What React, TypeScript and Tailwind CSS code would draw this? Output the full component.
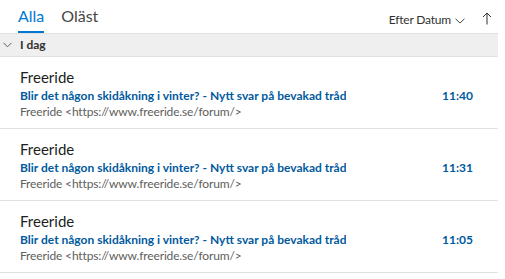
import React from 'react';

const items = [
  { from: 'Freeride', subject: 'Blir det någon skidåkning i vinter? - Nytt svar på bevakad tråd', time: '11:40', preview: 'Freeride <https://www.freeride.se/forum/>' },
  { from: 'Freeride', subject: 'Blir det någon skidåkning i vinter? - Nytt svar på bevakad tråd', time: '11:31', preview: 'Freeride <https://www.freeride.se/forum/>' },
  { from: 'Freeride', subject: 'Blir det någon skidåkning i vinter? - Nytt svar på bevakad tråd', time: '11:05', preview: 'Freeride <https://www.freeride.se/forum/>' },
];

export default function App() {
  return (
    <div className="w-[505px] h-[279px] overflow-hidden bg-white font-['Lato',sans-serif] text-[#201f1e]">
      {/* Tabs + sort */}
      <div className="flex items-end h-[33px] pr-[13px]">
        <div className="flex items-end gap-[17px] pl-[18px]">
          <div className="flex flex-col">
            <span className="text-[16px] leading-[20px] text-[#0078d4] pb-[5px]">Alla</span>
            <div className="h-[2px] bg-[#0078d4]" />
          </div>
          <span className="text-[16px] leading-[20px] text-[#484644] pb-[7px]">Oläst</span>
        </div>
        <div className="ml-auto flex items-center pb-[5px] text-[#323130]">
          <span className="text-[12px] leading-[16px] tracking-[-0.2px]">Efter Datum</span>
          <svg className="ml-[4px] mt-[1px]" width="10" height="6" viewBox="0 0 10 6" fill="none" stroke="#484644" strokeWidth="1">
            <path d="M0.5 0.8 L5 5 L9.5 0.8" />
          </svg>
          <svg className="ml-[17px] mb-[3px]" width="10" height="13" viewBox="0 0 10 13" fill="none" stroke="#323130" strokeWidth="1">
            <path d="M5 12.5 V1 M1 5 L5 1 L9 5" />
          </svg>
        </div>
      </div>

      {/* Group header */}
      <div className="w-[498px] h-[24px] bg-[#efefef] border-y border-[#e1e1e1] flex items-center">
        <svg className="ml-[3px]" width="9" height="6" viewBox="0 0 9 6" fill="none" stroke="#605e5c" strokeWidth="1">
          <path d="M0.5 0.8 L4.5 4.8 L8.5 0.8" />
        </svg>
        <span className="ml-[8px] text-[12px] font-bold text-[#323130]">I dag</span>
      </div>

      {/* Messages */}
      <div className="w-[498px]">
        {items.map((m, i) => (
          <div key={i} className="h-[72px] border-b border-[#e1e1e1] pl-[20px] pr-[25px] pt-[10px]">
            <div className="text-[15px] leading-[20px] text-[#201f1e]">{m.from}</div>
            <div className="flex items-center text-[12px] leading-[17px] font-bold text-[#005a9e]">
              <span className="truncate">{m.subject}</span>
              <span className="ml-auto pl-2">{m.time}</span>
            </div>
            <div className="text-[12px] leading-[16px] tracking-[-0.15px] text-[#605e5c]">{m.preview}</div>
          </div>
        ))}
      </div>
    </div>
  );
}
